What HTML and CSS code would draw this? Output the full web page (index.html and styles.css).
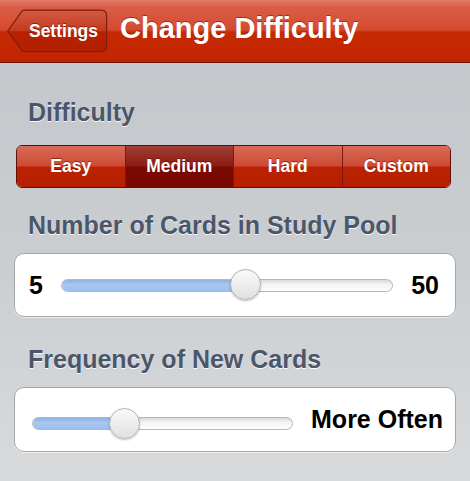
FILE: index.html
```html
<!DOCTYPE html>
<html lang="en">
<head>
<meta charset="utf-8">
<title>Change Difficulty</title>
<link rel="stylesheet" href="styles.css">
</head>
<body>
<div class="screen">
  <header class="navbar">
    <a class="back">
      <svg class="back-shape" width="101" height="44" viewBox="0 0 101 44">
        <defs>
          <linearGradient id="bg" x1="0" y1="0" x2="0" y2="1">
            <stop offset="0" stop-color="#d45a44"/>
            <stop offset="0.5" stop-color="#c43a1f"/>
            <stop offset="0.52" stop-color="#b82200"/>
            <stop offset="1" stop-color="#b21f00"/>
          </linearGradient>
        </defs>
        <path d="M0.8 22 L14.6 2.6 Q15.6 1.2 17.4 1.2 H94 Q99.6 1.2 99.6 7 V37 Q99.6 42.6 94 42.6 H17.4 Q15.6 42.6 14.6 41.2 Z" fill="url(#bg)" stroke="#7e1d0d" stroke-width="1.2"/>
      </svg>
      <span class="back-label">Settings</span>
    </a>
    <h1 class="title">Change Difficulty</h1>
  </header>

  <main class="content">
    <h2 class="section-title">Difficulty</h2>
    <div class="segmented">
      <div class="seg">Easy</div>
      <div class="seg selected">Medium</div>
      <div class="seg">Hard</div>
      <div class="seg">Custom</div>
    </div>

    <h2 class="section-title second">Number of Cards in Study Pool</h2>
    <div class="card card-pool">
      <span class="val">5</span>
      <div class="slider" style="--v: 55.3%">
        <div class="track"><div class="fill"></div></div>
        <div class="thumb"></div>
      </div>
      <span class="val">50</span>
    </div>

    <h2 class="section-title third">Frequency of New Cards</h2>
    <div class="card card-freq">
      <div class="slider" style="--v: 35.2%">
        <div class="track"><div class="fill"></div></div>
        <div class="thumb"></div>
      </div>
      <span class="val">More Often</span>
    </div>
  </main>
</div>
</body>
</html>
```

FILE: styles.css
```css
* { box-sizing: border-box; }

html, body {
  margin: 0;
  padding: 0;
}

body {
  width: 470px;
  height: 481px;
  overflow: hidden;
  font-family: "Liberation Sans", Arial, Helvetica, sans-serif;
  background: linear-gradient(#c2c5c9 0%, #cbced1 55%, #d8dadc 100%);
}

.screen {
  display: flex;
  flex-direction: column;
}

.navbar {
  height: 63px;
  display: flex;
  align-items: center;
  padding-left: 7px;
  gap: 12px;
  background: linear-gradient(#e27a69 0%, #db5c45 12%, #d44a30 48%, #c62a02 52%, #c22400 100%);
  border-bottom: 1px solid #6a1405;
}

.back {
  position: relative;
  width: 101px;
  height: 44px;
  display: flex;
  align-items: center;
  justify-content: center;
  padding-left: 12px;
}

.back-shape {
  position: absolute;
  left: 0;
  top: 0;
}

.back-label {
  position: relative;
  color: #fff;
  font-weight: bold;
  font-size: 17.5px;
  text-shadow: 0 -1px 0 rgba(90, 10, 0, 0.6);
}

.title {
  margin: 0 0 5px 0;
  color: #fff;
  font-size: 29px;
  font-weight: bold;
  text-shadow: 0 -1px 0 rgba(100, 15, 0, 0.55);
}

.content {
  display: flex;
  flex-direction: column;
  padding: 34px 14px 0 14px;
}

.section-title {
  margin: 0 0 0 14px;
  font-size: 25px;
  line-height: 30px;
  font-weight: bold;
  color: #4b566b;
  text-shadow: 0 1px 0 rgba(255, 255, 255, 0.9);
}

.section-title.second {
  margin-top: 22px;
  margin-bottom: 13px;
}

.section-title.third {
  margin-top: 27px;
  margin-bottom: 13px;
}

.segmented {
  margin: 18px 0 0 2px;
  width: 435px;
  height: 43px;
  display: flex;
  border: 1px solid #5b1309;
  border-radius: 6px;
  overflow: hidden;
}

.seg {
  flex: 1;
  display: flex;
  align-items: center;
  justify-content: center;
  color: #fff;
  font-weight: bold;
  font-size: 17.5px;
  text-shadow: 0 -1px 0 rgba(80, 5, 0, 0.55);
  background: linear-gradient(#d86b59 0%, #cd4a33 48%, #bb2300 52%, #b51e00 100%);
  border-left: 1px solid #7d1708;
}

.seg:first-child { border-left: none; }

.seg.selected {
  background: linear-gradient(#a04038 0%, #8c1c12 48%, #7a0900 52%, #780800 100%);
}

.card {
  width: 442px;
  height: 64px;
  background: #fff;
  border: 1px solid #a4a6a9;
  border-radius: 10px;
  display: flex;
  align-items: center;
  gap: 18px;
  box-shadow: 0 1px 0 rgba(255, 255, 255, 0.6);
}

.card-pool {
  padding: 0 16px 0 14px;
}

.card-freq {
  padding: 0 12px 0 17px;
  height: 65px;
}

.val {
  font-size: 25px;
  font-weight: bold;
  color: #000;
  line-height: 1;
}

.slider {
  position: relative;
  flex: 1;
  height: 30px;
  display: flex;
  align-items: center;
}

.card-freq .slider {
  margin-top: 8px;
}

.track {
  width: 100%;
  height: 13px;
  border-radius: 7px;
  border: 1px solid #b5b7ba;
  background: linear-gradient(#d9d9d9 0%, #f4f4f4 40%, #fdfdfd 100%);
  overflow: hidden;
}

.fill {
  width: var(--v);
  height: 100%;
  background: linear-gradient(#8cb1e2 0%, #a8c6f0 40%, #9cc0ee 100%);
}

.thumb {
  position: absolute;
  top: -1px;
  left: calc(var(--v) - 15px);
  width: 31px;
  height: 31px;
  border-radius: 50%;
  border: 1px solid #b3b3b3;
  background: linear-gradient(#fafafa 0%, #ededed 50%, #e0e0e0 100%);
  box-shadow: 0 1px 2px rgba(0, 0, 0, 0.25);
}
```
